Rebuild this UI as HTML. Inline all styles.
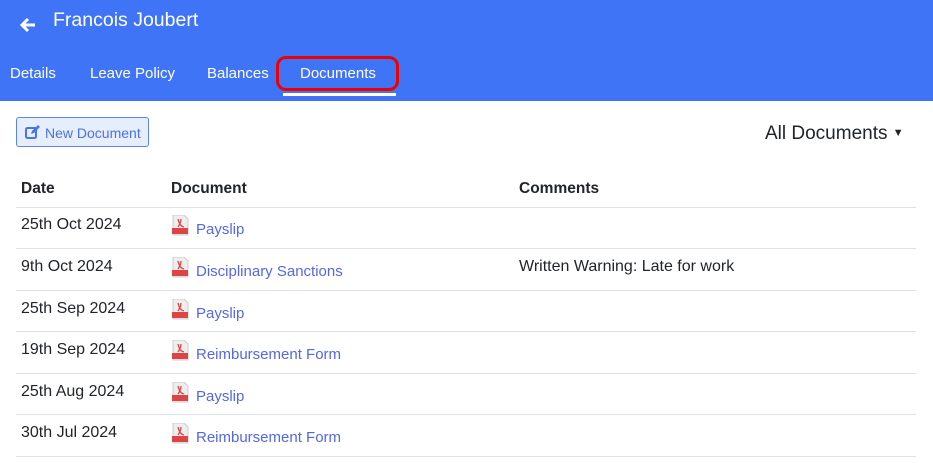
<!DOCTYPE html>
<html><head><style>
body{margin:0;width:933px;height:463px;overflow:hidden;font-family:"Liberation Sans",sans-serif;background:#fff;color:#212529}
.hdr{position:absolute;left:0;top:0;width:933px;height:101px;background:#3f74f7}
.title{position:absolute;left:53px;top:9px;color:#fff;font-size:19.5px}
.arrow{position:absolute;left:19px;top:16px}
.tab{position:absolute;top:65px;color:#fff;font-size:15px}
.ring{position:absolute;left:276px;top:56px;width:123px;height:35px;border:3px solid #e00;border-radius:10px;box-sizing:border-box}
.ul{position:absolute;left:283px;top:93px;width:113px;height:3px;background:#fff}
.btn{position:absolute;left:16px;top:117px;width:133px;height:30px;box-sizing:border-box;border:1px solid #5b86ee;border-radius:3px;background:#e6eefc;color:#4b72e6;font-size:14px}
.btn span{position:absolute;left:28px;top:7px}
.all{position:absolute;left:765px;top:123px;font-size:19px;color:#212529}
.th{position:absolute;top:180px;font-weight:bold;font-size:15.5px}
.line{position:absolute;left:16px;width:900px;height:1px;background:#dee2e6}
.d{position:absolute;left:21px;font-size:16px}
.c{position:absolute;left:519px;font-size:16px}
.a{position:absolute;left:196px;font-size:15px;color:#5467ea}
.ic{position:absolute;left:172px}
</style></head><body>
<div class="hdr">
<svg class="arrow" width="18" height="18" viewBox="0 0 18 18"><path d="M16 9H4M9 3L3 9l6 6" stroke="#fff" stroke-width="3" fill="none"/></svg>
<div class="title">Francois Joubert</div>
<div class="tab" style="left:10px">Details</div>
<div class="tab" style="left:90px">Leave Policy</div>
<div class="tab" style="left:207px">Balances</div>
<div class="tab" style="left:300px">Documents</div>
<div class="ring"></div>
<div class="ul"></div>
</div>
<div class="btn"><svg style="position:absolute;left:8px;top:7px" width="15" height="15" viewBox="0 0 15 15"><rect x="1" y="3" width="10" height="10" rx="1.5" fill="none" stroke="#4b72e6" stroke-width="2"/><path d="M6 9l1-3 6-6 2 2-6 6z" fill="#4b72e6"/></svg><span>New Document</span></div>
<div class="all">All Documents <span style="font-size:11px;vertical-align:3px">▼</span></div>
<div class="th" style="left:21px">Date</div>
<div class="th" style="left:171px">Document</div>
<div class="th" style="left:519px">Comments</div>
<div class="line" style="top:207px"></div>
<div class="line" style="top:248px"></div>
<div class="line" style="top:290px"></div>
<div class="line" style="top:331px"></div>
<div class="line" style="top:373px"></div>
<div class="line" style="top:414px"></div>
<div class="line" style="top:456px"></div>

<div class="d" style="top:216px">25th Oct 2024</div>
<div class="d" style="top:258px">9th Oct 2024</div>
<div class="d" style="top:300px">25th Sep 2024</div>
<div class="d" style="top:341px">19th Sep 2024</div>
<div class="d" style="top:383px">25th Aug 2024</div>
<div class="d" style="top:424px">30th Jul 2024</div>
<div class="c" style="top:258px">Written Warning: Late for work</div>

<div class="a" style="top:221px">Payslip</div>
<div class="a" style="top:263px">Disciplinary Sanctions</div>
<div class="a" style="top:305px">Payslip</div>
<div class="a" style="top:346px">Reimbursement Form</div>
<div class="a" style="top:388px">Payslip</div>
<div class="a" style="top:429px">Reimbursement Form</div>

<svg width="0" height="0" style="position:absolute"><defs><g id="p"><path d="M1 0h11l4 4v16H1z" fill="#eee" stroke="#ccc"/><path d="M6 4c1 4 2 7 6 8M6 12c2-3 3-5 3-8" stroke="#d44" stroke-width="1.3" fill="none"/><rect x="0" y="13" width="16" height="6" fill="#d44"/></g></defs></svg>
<svg class="ic" style="top:215px" width="17" height="21"><use href="#p"/></svg>
<svg class="ic" style="top:257px" width="17" height="21"><use href="#p"/></svg>
<svg class="ic" style="top:299px" width="17" height="21"><use href="#p"/></svg>
<svg class="ic" style="top:340px" width="17" height="21"><use href="#p"/></svg>
<svg class="ic" style="top:382px" width="17" height="21"><use href="#p"/></svg>
<svg class="ic" style="top:423px" width="17" height="21"><use href="#p"/></svg>
</body></html>
